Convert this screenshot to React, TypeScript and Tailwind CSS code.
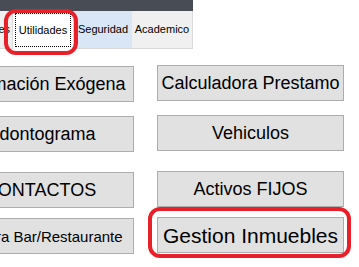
import React from "react";

const leftButtons = [
  { label: "Información Exógena", size: "text-[18px]", mt: "mt-[17px]" },
  { label: "Odontograma", size: "text-[18px]", mt: "mt-[14px]" },
  { label: "CONTACTOS", size: "text-[18px]", mt: "mt-[20px]" },
  { label: "Factura Bar/Restaurante", size: "text-[15px]", mt: "mt-[10px]" },
];

const rightButtons = [
  { label: "Calculadora Prestamo", size: "text-[18px]", mt: "mt-[16px]" },
  { label: "Vehiculos", size: "text-[18px]", mt: "mt-[14px]" },
  { label: "Activos FIJOS", size: "text-[18px]", mt: "mt-[20px]" },
  { label: "Gestion Inmuebles", size: "text-[21px]", mt: "mt-[10px]" },
];

function FormButton({ label, size, mt }: { label: string; size: string; mt: string }) {
  return (
    <button
      className={`${mt} ${size} h-[36px] w-[187px] shrink-0 whitespace-nowrap border border-[#adadad] bg-[#e1e1e1] leading-none text-black`}
    >
      {label}
    </button>
  );
}

export default function App() {
  return (
    <div className="relative h-[267px] w-[359px] overflow-hidden bg-white font-['Liberation_Sans',Arial,sans-serif]">
      {/* tab header */}
      <div className="w-[193px] overflow-hidden">
        <div className="h-[11px] bg-[#474c55]" />
        <div className="flex h-[38px] text-[11px] text-black">
          <div className="ml-[-40px] flex w-[53px] items-center justify-end border-b border-r border-[#d9d9d9] bg-[#f0f0f0] pr-[2px]">
            Reportes
          </div>
          <div className="flex w-[60px] items-center justify-center bg-white p-[2px]">
            <div className="flex h-full w-full items-center justify-center border border-dotted border-black">
              Utilidades
            </div>
          </div>
          <div className="flex w-[59px] items-center justify-center border-b border-l border-[#d9d9d9] bg-[#d8e6f5]">
            Seguridad
          </div>
          <div className="flex w-[61px] items-center justify-center border-b border-r border-[#d9d9d9] bg-[#f0f0f0]">
            Academico
          </div>
        </div>
      </div>

      {/* buttons */}
      <div className="ml-[-53px] flex gap-[23px]">
        <div className="flex flex-col">
          {leftButtons.map((b) => (
            <FormButton key={b.label} {...b} />
          ))}
        </div>
        <div className="flex flex-col">
          {rightButtons.map((b) => (
            <FormButton key={b.label} {...b} />
          ))}
        </div>
      </div>

      {/* red annotations */}
      <div className="absolute left-[4px] top-[9px] h-[46px] w-[74px] rounded-[12px] border-[4px] border-[#e8202a]" />
      <div className="absolute left-[148px] top-[207px] h-[51px] w-[203px] rounded-[12px] border-[4px] border-[#e8202a]" />
    </div>
  );
}
